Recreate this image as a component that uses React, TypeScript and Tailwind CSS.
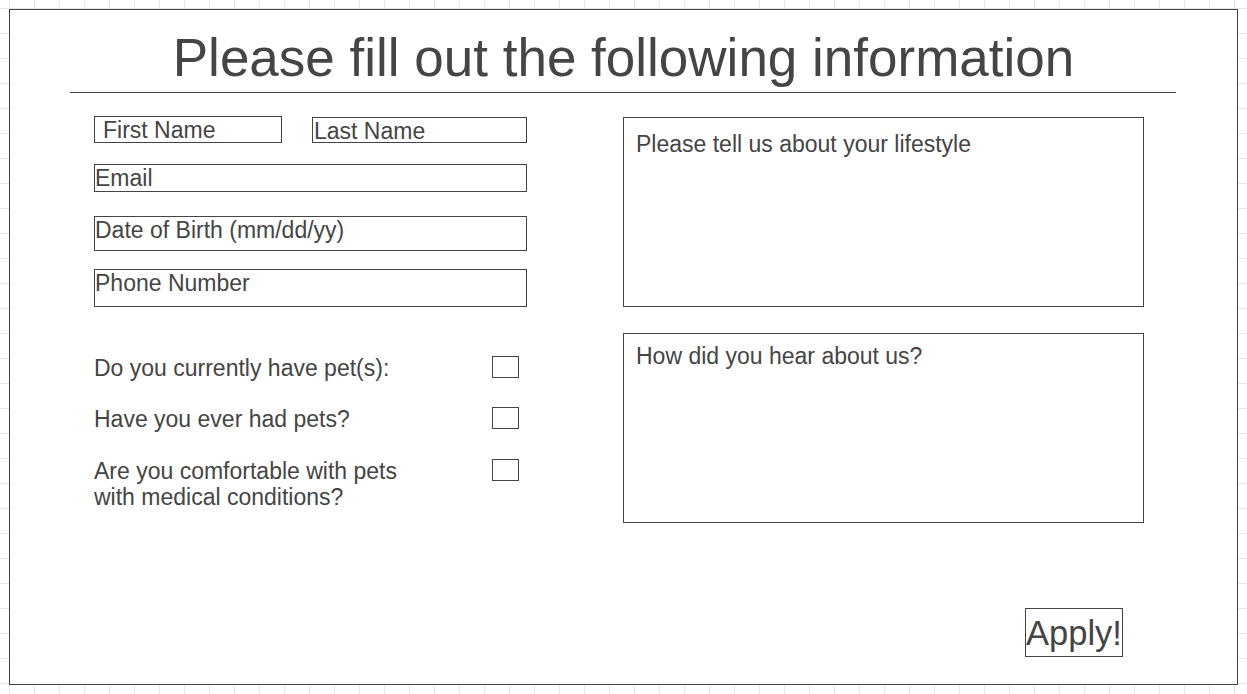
const fieldBox = "border border-[#444] bg-white leading-[26px] whitespace-nowrap";

const petQuestions = [
  { label: "Do you currently have pet(s):", rowClass: "h-[51px]" },
  { label: "Have you ever had pets?", rowClass: "h-[52px]" },
  { label: "Are you comfortable with pets\nwith medical conditions?", rowClass: "" },
];

function TextField({ label, className }: { label: string; className: string }) {
  return <div className={`${fieldBox} ${className}`}>{label}</div>;
}

function PetQuestion({ label, rowClass }: { label: string; rowClass: string }) {
  return (
    <div className={`flex items-start ${rowClass}`}>
      <p className="w-[398px] whitespace-pre-line leading-[25.5px]">{label}</p>
      <span className="h-[22px] w-[27px] border border-[#444] bg-white" />
    </div>
  );
}

export default function App() {
  return (
    <div className="h-[694px] w-[1247px] overflow-hidden bg-white bg-[linear-gradient(to_right,#e6e6e6_1px,transparent_1px),linear-gradient(to_bottom,#e6e6e6_1px,transparent_1px)] pt-[9px] pl-[9px] font-['Liberation_Sans',Arial,sans-serif] text-[23px] text-[#454545] [background-position:9px_8px] [background-size:25px_25px]">
      <div className="flex h-[676px] w-[1229px] flex-col border border-[#444] bg-white">
        <div className="h-[82px] pt-[17px]">
          <h1 className="text-center text-[53px] leading-[61px] whitespace-nowrap">
            Please fill out the following information
          </h1>
        </div>
        <div className="ml-[60px] h-px w-[1106px] bg-[#444]" />

        <div className="flex h-[430px] pl-[84px]">
          <div className="w-[433px]">
            <div className="mt-[23px] flex items-start gap-[30px]">
              <TextField label="First Name" className="h-[27px] w-[188px] pl-[8px]" />
              <TextField label="Last Name" className="mt-px h-[26px] w-[215px] pl-px" />
            </div>
            <TextField label="Email" className="mt-[21px] h-[28px] w-[433px]" />
            <TextField label="Date of Birth (mm/dd/yy)" className="mt-[24px] h-[35px] w-[433px]" />
            <TextField label="Phone Number" className="mt-[18px] h-[38px] w-[433px]" />

            <div className="mt-[49px]">
              {petQuestions.map((q) => (
                <PetQuestion key={q.label} label={q.label} rowClass={q.rowClass} />
              ))}
            </div>
          </div>

          <div className="ml-[96px] w-[521px]">
            <div className="mt-[24px] h-[190px] border border-[#444] pt-[13px] pl-[12px] leading-[26px]">
              Please tell us about your lifestyle
            </div>
            <div className="mt-[26px] h-[190px] border border-[#444] pt-[9px] pl-[12px] leading-[26px]">
              How did you hear about us?
            </div>
          </div>
        </div>

        <div className="mt-[85px] flex justify-end pr-[114px]">
          <button
            type="button"
            className="h-[49px] w-[98px] border border-[#444] bg-white text-left text-[34.5px] leading-[40px] whitespace-nowrap"
          >
            Apply!
          </button>
        </div>
      </div>
    </div>
  );
}
